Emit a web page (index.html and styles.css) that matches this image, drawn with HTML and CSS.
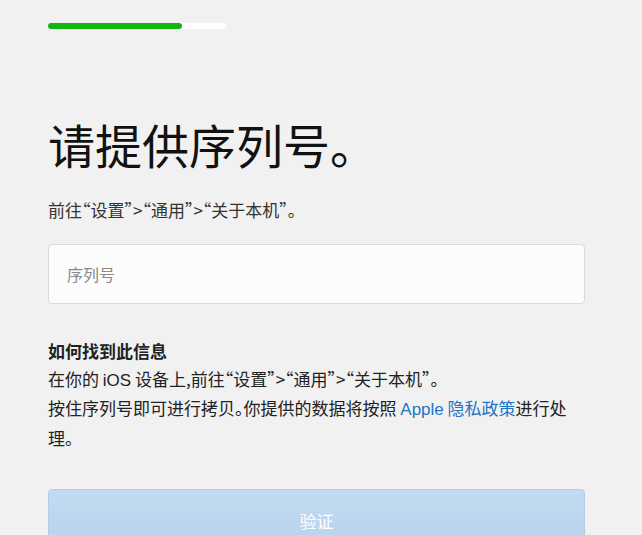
FILE: index.html
```html
<!doctype html>
<html lang="zh-CN">
<head>
  <meta charset="utf-8" />
  <meta name="viewport" content="width=device-width,initial-scale=1" />
  <title>请提供序列号</title>
  <link rel="stylesheet" href="styles.css">
</head>
<body>

  <div class="page">
    <div class="progress"><div class="progress-fill" style="width:75%"></div></div>

    <h1>请提供序列号。</h1>
    <p class="lead">前往“设置”&gt;“通用”&gt;“关于本机”。</p>

    <input class="field" type="text" placeholder="序列号">

    <div class="help">
      <div class="help-title">如何找到此信息</div>
      <p>在你的 <span class="en">iOS</span> 设备上,前往“设置”&gt;“通用”&gt;“关于本机”。</p>
      <p>按住序列号即可进行拷贝。你提供的数据将按照 <a href="#"><span class="en">Apple</span> 隐私政策</a>进行处理。</p>
    </div>

    <button class="btn" type="button" disabled>验证</button>
  </div>

</body>
</html>
```

FILE: styles.css
```css
:root{
  --bg:#f1f1f1;
  --text:#1d1d1f;
  --link:#1f74c4;
  font-family: "Noto Sans CJK SC", "Liberation Sans", sans-serif;
}
body{
  margin:0;
  background:var(--bg);
  color:var(--text);
}

.page{
  width:537px;
  padding:23px 0 0 48px;
}

.progress{
  width:178px;
  height:6px;
  border-radius:3px;
  background:#ffffff;
}
.progress-fill{
  height:100%;
  border-radius:3px;
  background:#12b512;
}

h1{
  margin:85px 0 0 0;
  font-size:47px;
  font-weight:400;
  line-height:60px;
  color:#111;
}

p.lead{
  margin:25px 0 0 0;
  font-size:17px;
  line-height:22px;
  color:#333;
  font-feature-settings:"halt";
}

.field{
  display:block;
  width:100%;
  height:60px;
  margin-top:23px;
  padding:0 18px;
  box-sizing:border-box;
  border:1px solid #d9d9d9;
  border-radius:4px;
  background:#fcfcfc;
  font-family:inherit;
  font-size:16px;
  color:var(--text);
}
.field::placeholder{ color:#8a8a8a; }

.help{
  margin-top:33px;
  font-size:17px;
  line-height:27.5px;
  color:#222;
}
.help-title{ font-weight:700; }
.help p{ margin:0; font-feature-settings:"halt"; }
.help a{ color:var(--link); text-decoration:none; }
.en{ font-family:"Liberation Sans", sans-serif; }

.btn{
  display:block;
  width:100%;
  height:62px;
  margin-top:38px;
  border:1px solid #b3cde6;
  border-radius:4px;
  background:linear-gradient(#c3dbf1, #b8d2ee);
  color:#fff;
  font-family:inherit;
  font-size:17px;
}
```
